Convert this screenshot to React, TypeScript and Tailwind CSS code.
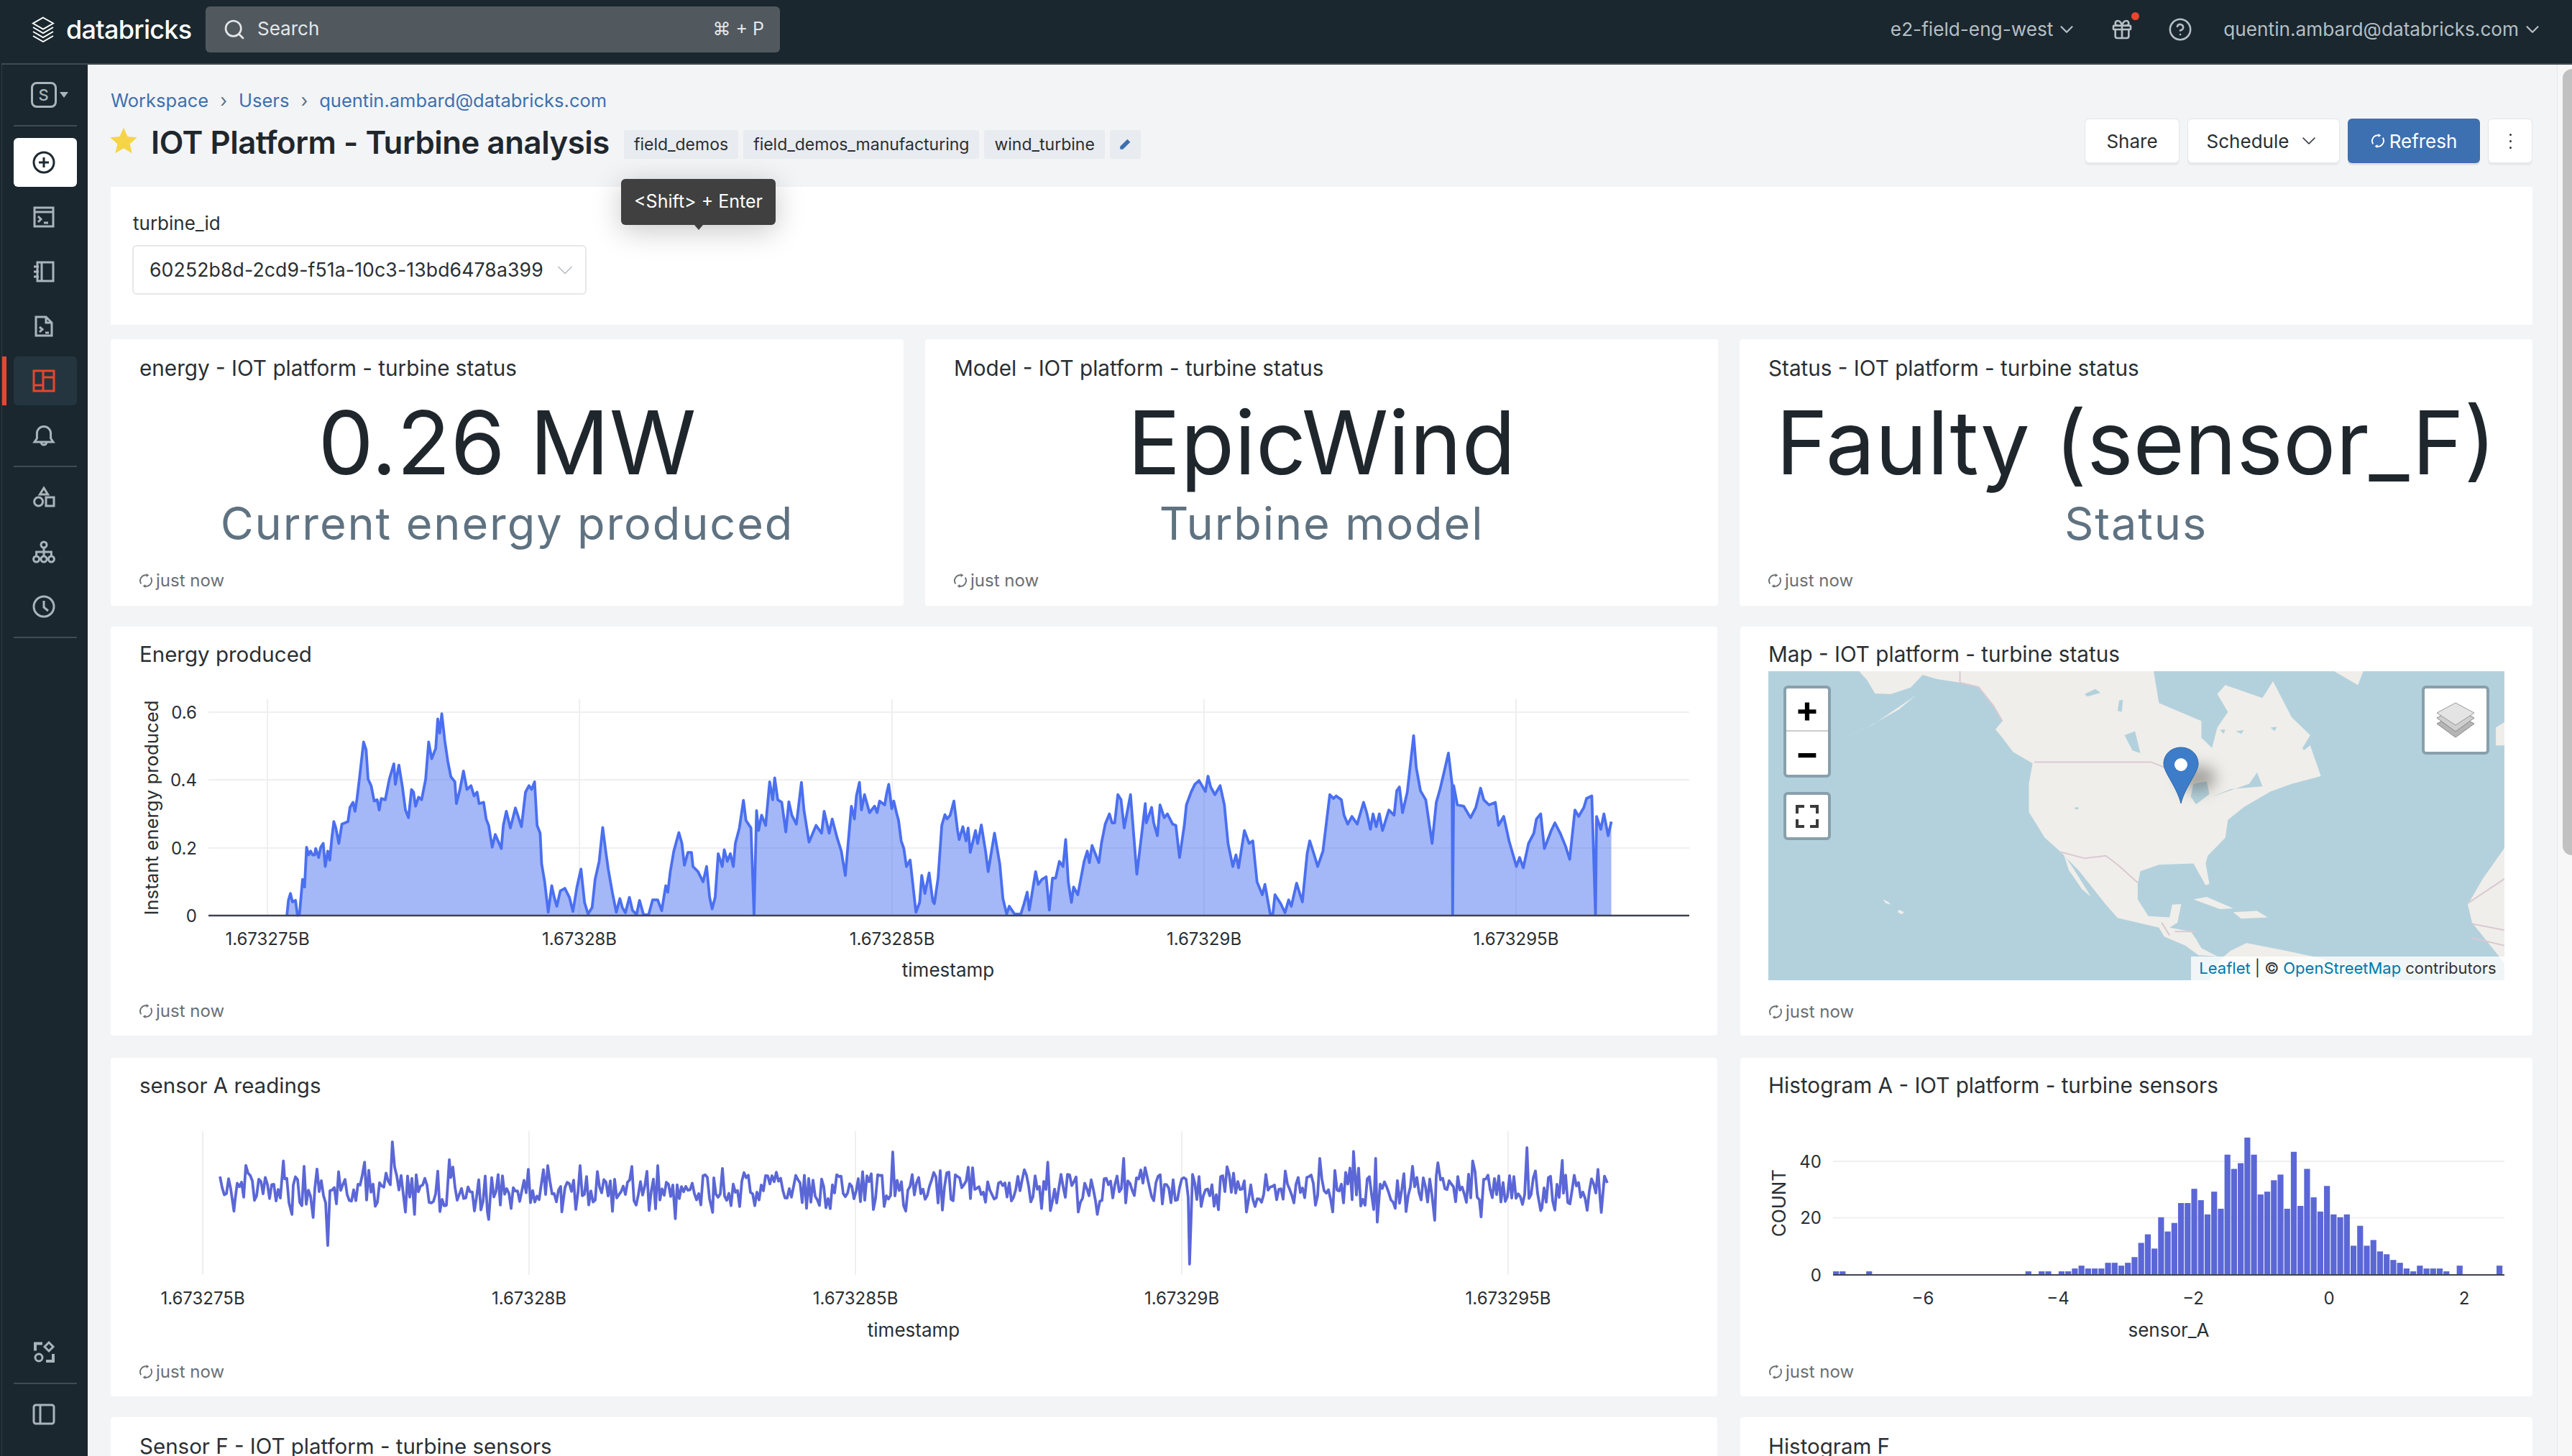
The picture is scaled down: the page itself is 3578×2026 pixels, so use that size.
import { ChevronDown, CircleHelp, Gift, Search } from "lucide-react";

const energyLeft = "355,1130 358,1072 362,1045 366,1078 372,1072 376,1130 380,1125 386,990 390,1020 394,865 398,895 402,880 406,895 410,895 412,870 418,905 422,865 427,850 431,940 436,880 440,915 444,830 448,765 452,790 458,850 464,775 470,770 476,765 480,710 486,690 490,725 494,675 498,610 507,455 512,485 516,600 522,625 528,685 534,680 538,720 542,675 550,680 558,600 567,540 570,620 577,545 584,630 590,720 596,750 602,640 606,650 610,705 616,670 622,680 630,600 636,455 642,520 650,480 654,365 658,420 662,345 668,450 674,530 680,590 688,610 691,695 698,640 705,568 712,640 720,625 726,665 732,650 736,695 745,690 750,755 755,780 762,865 768,815 780,870 784,780 790,725 798,790 808,712 820,785 828,650 835,625 840,640 846,610 851,780 857,810 860,930 866,1000 873,1118 880,1015 885,1060 890,1095 897,1035 906,1025 915,1060 922,1115 930,1020 938,950 945,1080 952,1125 960,1100 966,990 974,920 981,788 987,880 992,950 1000,1040 1008,1118 1015,1065 1020,1100 1026,1120 1034,1060 1040,1110 1048,1128 1054,1072 1062,1128 1072,1128 1080,1070 1090,1070 1098,1112 1106,1015 1110,1040 1115,960 1122,880 1132,808 1138,850 1143,935 1150,885 1157,885 1160,940 1170,960 1180,1000 1187,940 1193,1060 1198,1105 1204,1060 1210,890 1218,940 1222,875 1228,920 1234,890 1240,940 1244,850 1252,790 1260,682 1265,760 1275,790 1281,1128 1286,722 1290,800 1296,740 1304,780 1312,610 1318,680 1322,595 1328,680 1336,690 1344,805 1350,688 1356,740 1365,775 1375,612 1380,720 1390,845 1404,780 1415,810 1420,725 1430,810 1436,755 1446,830 1454,880 1462,975 1474,705 1480,755 1484,665 1490,612 1494,720 1500,660 1510,730 1520,705 1525,730 1530,685 1540,700 1544,655 1548,620 1554,715 1558,685 1564,735";
const energyRight = "0,760 5,840 10,870 15,940 22,915 33,1118 40,1080 44,975 50,1045 58,965 65,1075 68,1085 75,985 82,780 88,738 92,755 98,740 105,685 112,800 115,835 122,785 128,840 132,790 136,885 146,800 150,850 157,778 165,880 170,960 182,810 192,930 198,1065 205,1125 210,1095 220,1125 232,1125 238,1085 244,1040 248,1110 260,960 265,1010 272,990 280,980 286,1110 292,985 298,985 305,920 312,940 317,835 322,1000 328,1080 332,1020 340,1050 352,920 358,880 362,925 367,858 380,925 385,848 392,775 400,735 405,770 410,770 416,660 422,680 428,790 440,660 452,970 462,800 468,695 470,770 480,710 484,770 491,820 496,700 504,750 510,735 520,775 526,780 533,905 542,780 546,700 555,650 562,620 570,605 582,648 587,588 592,630 600,660 610,625 618,700 625,850 634,940 640,895 645,945 656,800 665,850 672,840 680,1000 690,1050 695,1010 705,1125 710,1125 714,1050 725,1085 733,1120 740,1070 745,1095 755,1005 766,1078 775,890 780,840 790,905 795,940 805,880 818,660 825,675 830,665 840,680 845,740 852,775 860,745 870,775 882,690 888,730 895,795 900,735 906,785 912,735 918,800 930,720 940,740 945,645 950,630 956,730 965,650 977,430 982,555 990,645 1000,680 1012,850 1020,690 1027,640 1035,570 1043,498 1050,620 1051,1128 1053,625 1060,700 1072,705 1085,750 1095,710 1104,635 1110,680 1120,700 1132,690 1138,780 1148,745 1158,840 1172,940 1178,905 1185,945 1195,850 1205,810 1210,755 1218,735 1225,870 1238,800 1245,770 1255,810 1265,860 1273,912 1283,720 1290,745 1300,710 1305,675 1315,665 1322,1128 1324,745 1332,795 1338,735 1346,820 1352,765";

// traced from the reference, converted to page px
const parsePts = (s: string, fx: (x: number) => number) =>
  s.split(" ").map((p) => {
    const [x, y] = p.split(",").map(Number);
    return [fx(x), 870 + y / 2.8];
  });
const energyPts = [
  ...parsePts(energyLeft, (x) => 150 + x / 1.425),
  ...parsePts(energyRight, (x) => 1250 + x / 1.3635),
];
const energyLine = energyPts.map((p) => p.join(",")).join(" ");
const energyArea = `${energyPts[0][0]},1274 ${energyLine} ${energyPts[energyPts.length - 1][0]},1274`;

function rng(seed: number) {
  return () => {
    seed = (seed * 1664525 + 1013904223) % 4294967296;
    return seed / 4294967296;
  };
}

const rand = rng(17);
const sensorPts: number[][] = [];
for (let x = 306; x <= 2233; x += 3) {
  sensorPts.push([x, 1654 + (rand() - 0.5) * (rand() > 0.6 ? 66 : 40)]);
}
sensorPts.push([2236, 1646]);
const spikesA = [[564, 335], [436, 742], [348, 410], [407, 632], [755, 640], [1125, 637], [1556, 375], [509, 415], [677, 405], [365, 620], [250, 607], [1198, 432], [1199, 612], [608, 620], [900, 610]];
const spikesB = [[552, 815], [863, 373], [908, 650], [1192, 358], [1017, 643], [427, 400], [377, 620], [283, 415], [288, 605], [799, 400], [905, 400], [1023, 417], [1089, 410], [1105, 630], [1259, 408], [1333, 612], [1218, 605]];
spikesA.forEach(([zx, zy]) => {
  const x = 150 + zx / 1.425;
  sensorPts[Math.round((x - 306) / 3)] = [x, 1470 + zy / 2.82];
});
spikesB.forEach(([zx, zy]) => {
  const x = 1250 + zx / 1.3635;
  sensorPts[Math.round((x - 306) / 3)] = [x, 1470 + zy / 2.82];
});
const sensorLine = sensorPts.map((p) => p.join(",")).join(" ");

const histo = [1, 1, 0, 0, 0, 1, ...Array(23).fill(0), 1, 0, 1, 1, 0, 1, 1, 2, 3, 2, 2, 2, 4, 4, 3, 4, 6, 11, 14, 9, 20, 15, 18, 25, 25, 30, 26, 21, 29, 23, 42, 37, 39, 48, 42, 28, 29, 33, 35, 23, 43, 24, 37, 27, 22, 31, 21, 20, 21, 10, 17, 10, 12, 8, 7, 5, 4, 2, 1, 3, 2, 2, 2, 1, 0, 3, 0, 0, 0, 0, 0, 3];

function SyncIcon({ className }: { className: string }) {
  return (
    <svg viewBox="0 0 16 16" className={className} fill="none" stroke="currentColor" strokeWidth="1.5">
      <path d="M2.600 11.500A6.300 6.300 0 0 1 9 1.900" />
      <path d="M13.400 4.500A6.300 6.300 0 0 1 7 14.100" />
      <path d="M8.500 0l3 2-3 2z" fill="currentColor" stroke="none" />
      <path d="M7.500 16l-3-2 3-2z" fill="currentColor" stroke="none" />
    </svg>
  );
}

function JustNow({ className }: { className: string }) {
  return (
    <div className={`flex items-center gap-[4px] pl-[39px] text-[24px] leading-none text-[#6b6f73] ${className}`}>
      <SyncIcon className="h-[20px] w-[20px]" />
      <span>just now</span>
    </div>
  );
}

function StatCard({ title, value, sub }: { title: string; value: string; sub: string }) {
  return (
    <div className="flex h-[371px] flex-col rounded-[4px] bg-white">
      <div className="pl-[40px] pt-[22px] text-[29.7px] leading-[36px] text-[#2a2f33]">{title}</div>
      <div className="mt-[21px] text-center text-[122.5px] leading-[130px] text-[#1f272d]">{value}</div>
      <div className="mt-[7px] text-center text-[63px] leading-[80px] tracking-[0.03em] text-[#5f7281]">{sub}</div>
      <JustNow className="mt-[28px]" />
    </div>
  );
}

function SideItem({ active, red, children }: { active?: boolean; red?: boolean; children: React.ReactNode }) {
  return (
    <div className="relative flex h-[68px] w-[88px] shrink-0 items-center pl-[26px]">
      {active && <div className="absolute inset-0 rounded-[6px] bg-white" />}
      {red && <div className="absolute inset-0 rounded-[6px] bg-[#24353f]" />}
      {red && <div className="absolute left-[-16px] top-0 h-[68px] w-[6px] bg-[#e8462e]" />}
      <svg
        viewBox="0 0 16 16"
        className={`relative h-[32px] w-[32px] ${active ? "text-[#1d2a33]" : red ? "text-[#e8462e]" : "text-[#a9b5ba]"}`}
        fill="none"
        stroke="currentColor"
        strokeWidth="1.5"
      >
        {children}
      </svg>
    </div>
  );
}

function Rule() {
  return <div className="h-[2px] w-[88px] shrink-0 bg-[#3f4c54]" />;
}

function Tag({ children }: { children: React.ReactNode }) {
  return (
    <div className="flex h-[40px] items-center rounded-[3px] bg-[#e8ebef] px-[14px] text-[23px] text-[#2a2f33]">{children}</div>
  );
}

function MapView() {
  return (
    <div className="relative ml-[39px] h-[430px] w-[1024px] overflow-hidden bg-[#b3d1dd]">
      <svg viewBox="54 151 1387 1204" preserveAspectRatio="none" className="block h-[430px] w-[1024px]">
        <g fill="#f0eeea">
          <path d="M225 151L240 185 255 238 285 240 322 215 345 165 372 182 415 195 450 212 478 285 495 345 482 378 492 402 515 465 552 510 545 590 545 700 575 800 605 855 640 930 690 1060 712 1112 790 1150 800 1185 840 1220 865 1258 900 1262 870 1230 860 1195 850 1165 810 1150 825 1130 832 1058 815 1060 810 1110 770 1105 750 1040 750 980 755 930 790 905 855 900 878 985 885 980 878 900 882 870 915 800 920 730 950 680 1000 620 1040 590 1095 560 1085 500 1060 452 1075 400 1040 330 1005 190 985 255 915 205 900 240 920 310 900 370 890 450 870 410 870 345 790 275 780 151Z" />
          <path d="M885 1355L905 1275 925 1240 955 1210 1030 1240 1082 1263 1150 1300 1240 1355Z" />
          <path d="M610 860L635 940 662 1030 645 1000 620 925Z" />
          <path d="M202 405L250 360 300 290 332 245 300 300 240 370Z" />
          <path d="M855 1040L880 1030 930 1075 905 1078Z" />
          <path d="M930 1090L975 1085 995 1110 945 1115Z" />
          <path d="M1120 151L1165 205 1175 151Z" />
          <path d="M1441 840L1400 960 1372 1060 1380 1130 1430 1260 1441 1290Z" />
          <path d="M1425 370L1441 350 1441 440 1425 440Z" />
          <path d="M1050 480L1075 440 1095 560 1060 530Z" />
          <path d="M270 1040L280 1050 285 1060 275 1055ZM300 1080L310 1090 305 1098 298 1090Z" />
        </g>
        <g fill="#b3d1dd">
          <path d="M725 400L745 385 755 470 740 460Z" />
          <path d="M855 590L880 580 885 630 860 670 850 640Z" />
          <path d="M890 640L960 590 975 545 985 600 925 610Z" />
          <path d="M650 240L670 220 680 235 655 250Z" />
          <path d="M715 265L722 262 720 310 712 305ZM905 380L915 378 912 395ZM935 385L950 380 945 395ZM1000 370L1012 368 1008 385Z" />
          <circle cx="635" cy="685" r="4" />
        </g>
        <g fill="none" stroke="#d9c9d2" strokeWidth="2">
          <path d="M555 505H775L800 525" vectorEffect="non-scaling-stroke" />
          <path d="M605 855L650 880 690 870 715 910 750 975" vectorEffect="non-scaling-stroke" />
          <path d="M415 151V195L450 212 478 285 495 345" vectorEffect="non-scaling-stroke" />
          <path d="M795 1130L810 1180M820 1165L860 1165M1372 1055L1441 960M1380 1135L1441 1160M1380 1190L1441 1220" vectorEffect="non-scaling-stroke" />
        </g>
      </svg>
      {/* marker */}
      <div className="absolute left-[572px] top-[132px] h-[34px] w-[50px] rounded-full bg-[#5b5b55]/50 blur-[10px]" />
      <svg viewBox="0 0 50 80" className="absolute left-[549px] top-[105px] h-[80px] w-[50px]">
        <path d="M25 79C19 55 1 36 1 24 1 11 11 1 25 1s24 10 24 23c0 12-18 31-24 55z" fill="#3d7cc9" stroke="#2a6aa8" strokeWidth="1" />
        <ellipse cx="25" cy="25" rx="9" ry="9" fill="#fff" />
      </svg>
      {/* leaflet controls */}
      <div className="absolute left-[21px] top-[20px] flex h-[128px] w-[66px] flex-col rounded-[6px] border-4 border-[#88a0ab] bg-white text-black">
        <div className="flex h-[60px] items-center justify-center border-b-2 border-[#ccc] text-[50px] font-bold leading-none">+</div>
        <div className="flex flex-1 items-center justify-center text-[50px] font-bold leading-none">−</div>
      </div>
      <div className="absolute left-[21px] top-[168px] flex h-[67px] w-[66px] items-center justify-center rounded-[6px] border-4 border-[#88a0ab] bg-white">
        <svg viewBox="0 0 32 32" className="h-[32px] w-[32px]" fill="none" stroke="#3a3a3a" strokeWidth="4">
          <path d="M2 12V2h10M20 2h10v10M30 20v10H20M12 30H2V20" />
        </svg>
      </div>
      <div className="absolute left-[909px] top-[20px] flex h-[96px] w-[94px] items-center justify-center rounded-[6px] border-4 border-[#88a0ab] bg-white">
        <svg viewBox="0 0 54 50" className="h-[50px] w-[54px]">
          <path d="M1 30L27 16 53 30 27 49z" fill="#b5b5b5" stroke="#888" />
          <path d="M1 22L27 8 53 22 27 41z" fill="#cfcfcf" stroke="#888" />
          <path d="M1 15L27 1 53 15 27 32z" fill="#e4e4e4" stroke="#999" />
        </svg>
      </div>
      <div className="absolute bottom-0 right-0 flex h-[33px] w-[436px] items-center justify-center gap-[6px] bg-white/80 text-[22px] text-[#333]">
        <span className="text-[#0078a8]">Leaflet</span>
        <span>| ©</span>
        <span className="text-[#0078a8]">OpenStreetMap</span>
        <span>contributors</span>
      </div>
    </div>
  );
}

export default function App() {
  return (
    <div className="flex h-screen w-full flex-col overflow-hidden bg-[#1a272f] pl-[2px] text-[#2a2f33] [font-family:Inter,sans-serif]">
      {/* top bar */}
      <div className="flex h-[90px] shrink-0 items-center border-b-2 border-[#3f4b52] bg-[#1a272f] pb-[6px]">
        <div className="flex w-[284px] items-center pl-[42px] text-white">
          <svg viewBox="0 0 32 36" className="h-[36px] w-[32px]" fill="none" stroke="currentColor" strokeWidth="2">
            <path d="M16 1.500L30 9.500 16 17.500 2 9.500z" />
            <path d="M2 15l14 8 14-8" />
            <path d="M2 21l14 8 14-8" />
            <path d="M2 27l14 8 14-8" />
          </svg>
          <span className="ml-[16px] text-[36px] font-medium leading-none tracking-[-0.02em]">databricks</span>
        </div>
        <div className="flex h-[64px] w-[799px] items-center rounded-[6px] bg-[#51595f] pl-[24px] pr-[22px] text-[#e4e7e9]">
          <Search className="h-[32px] w-[32px]" strokeWidth={2} />
          <span className="ml-[16px] pb-[3px] text-[26px]">Search</span>
          <span className="ml-auto text-[25px]">⌘ + P</span>
        </div>
        <div className="ml-auto flex items-center text-[26.2px] text-[#b5bfc4]">
          <span>e2-field-eng-west</span>
          <ChevronDown className="ml-[4px] h-[30px] w-[30px]" strokeWidth={1.8} />
          <div className="relative ml-[46px]">
            <Gift className="h-[32px] w-[32px]" strokeWidth={2} />
            <div className="absolute right-[-8px] top-[-8px] h-[11px] w-[11px] rounded-full bg-[#e8462e]" />
          </div>
          <CircleHelp className="ml-[48px] h-[34px] w-[34px]" strokeWidth={1.8} />
          <span className="ml-[43px]">quentin.ambard@databricks.com</span>
          <ChevronDown className="ml-[4px] mr-[40px] h-[30px] w-[30px]" strokeWidth={1.8} />
        </div>
      </div>

      <div className="flex min-h-0 flex-1">
        {/* sidebar */}
        <div className="flex w-[120px] shrink-0 flex-col items-center gap-[8px] border-l border-[#2c3c46] bg-[#1a272f] pt-[8px]">
          <div className="flex h-[68px] w-[88px] shrink-0 items-center pl-[24px] text-[#a9b5ba]">
            <div className="flex h-[36px] w-[36px] items-center justify-center rounded-[8px] border-[3px] border-[#a9b5ba] text-[22px] font-medium leading-none">S</div>
            <div className="ml-[4px] h-0 w-0 border-x-[6px] border-t-[8px] border-x-transparent border-t-[#a9b5ba]" />
          </div>
          <Rule />
          <div className="h-0" />
          <SideItem active>
            <circle cx="8" cy="8" r="7" />
            <path d="M8 4.500v7M4.500 8h7" />
          </SideItem>
          <SideItem>
            <rect x="1.500" y="1.500" width="13" height="13" />
            <path d="M1.500 4.500h13M4 7.500l2 2-2 2M8 12h3" />
          </SideItem>
          <SideItem>
            <rect x="3.500" y="1.500" width="11" height="13" />
            <path d="M1 4.500h3.500M1 8h3.500M1 11.500h3.500M6.500 1.500v13" />
          </SideItem>
          <SideItem>
            <path d="M2.500 14.500V1.500h7l4 4v9zM9.500 1.500v4h4M5 8.500l2 1.700-2 1.800M9 12.500h2.500" />
          </SideItem>
          <SideItem red>
            <rect x="1" y="1" width="14" height="14" />
            <path d="M7.500 1v14M1 11h6.500M7.500 5.500H15" />
          </SideItem>
          <SideItem>
            <path d="M1.500 12.500h13l-1.700-2.500V6.500a4.800 4.800 0 0 0-9.600 0V10zM6 12.500a2 2 0 0 0 4 0" />
          </SideItem>
          <Rule />
          <SideItem>
            <path d="M8 1.500l2.800 4.500H5.200z" />
            <circle cx="4.300" cy="11" r="3" />
            <rect x="9.500" y="8" width="5.500" height="6" />
          </SideItem>
          <SideItem>
            <circle cx="8" cy="3" r="2" />
            <circle cx="2.800" cy="13" r="2" />
            <circle cx="8" cy="13" r="2" />
            <circle cx="13.200" cy="13" r="2" />
            <path d="M8 5v6M2.800 11V8h10.400v3" />
          </SideItem>
          <SideItem>
            <circle cx="8" cy="8" r="7" />
            <path d="M8 4v4.500l3 2.500" />
          </SideItem>
          <Rule />
          <div className="flex-1" />
          <SideItem>
            <path d="M7 1.800H2v5M14.500 9v5H9.500" strokeWidth="2" />
            <path d="M11.500 1l3 3-3 3-3-3z" />
            <circle cx="4.500" cy="11.500" r="2.500" />
          </SideItem>
          <Rule />
          <div className="mb-[24px]">
            <SideItem>
              <rect x="1" y="1.500" width="14" height="13" rx="1.500" />
              <path d="M5.500 1.500v13" />
            </SideItem>
          </div>
        </div>

        {/* page */}
        <div className="relative flex min-w-0 flex-1 bg-[#f3f4f6]">
          <div className="min-w-0 flex-1 overflow-hidden pl-[32px] pr-[34px]">
            <div className="flex h-[68px] items-end gap-[16px] pb-[2px] text-[25.5px] leading-[32px] text-[#3d70b0]">
              <span>Workspace</span>
              <span className="text-[#5f7281]">›</span>
              <span>Users</span>
              <span className="text-[#5f7281]">›</span>
              <span>quentin.ambard@databricks.com</span>
            </div>
            <div className="mt-[7px] flex h-[62px] items-center">
              <svg viewBox="0 0 24 24" className="ml-[-2px] h-[40px] w-[40px]" fill="#f5d547">
                <path d="M12 1l3.300 7.400 7.900.8-6 5.300 1.800 7.900-7-4.200-7 4.200 1.800-7.900-6-5.300 7.900-.8z" />
              </svg>
              <span className="ml-[18px] pt-[6px] text-[43.7px] font-semibold leading-none tracking-[-0.01em] text-[#1f272d]">IOT Platform - Turbine analysis</span>
              <div className="ml-[20px] mt-[10px] flex gap-[7px]">
                <Tag>field_demos</Tag>
                <Tag>field_demos_manufacturing</Tag>
                <Tag>wind_turbine</Tag>
                <div className="flex h-[40px] w-[43px] items-center justify-center rounded-[3px] bg-[#e8ebef]">
                  <svg viewBox="0 0 16 16" className="h-[18px] w-[18px]" fill="#3d70b0">
                    <path d="M11 1.500l3.500 3.500-9 9H2v-3.500z" />
                  </svg>
                </div>
              </div>
              <div className="ml-auto flex gap-[11px] text-[26px]">
                <div className="flex h-[62px] w-[132px] items-center justify-center rounded-[6px] border border-[#e4e6e9] bg-white shadow-[0_3px_0_#e8e9eb]">Share</div>
                <div className="flex h-[62px] w-[212px] items-center justify-center gap-[12px] rounded-[6px] border border-[#e4e6e9] bg-white shadow-[0_3px_0_#e8e9eb]">
                  Schedule
                  <ChevronDown className="h-[32px] w-[32px]" strokeWidth={1.2} />
                </div>
                <div className="flex h-[62px] w-[184px] items-center justify-center gap-[6px] rounded-[6px] bg-[#3d70b0] text-white shadow-[0_3px_0_#e0e2e6]">
                  <SyncIcon className="h-[20px] w-[20px]" />
                  Refresh
                </div>
                <div className="flex h-[62px] w-[62px] items-center justify-center rounded-[6px] border border-[#e4e6e9] bg-white shadow-[0_3px_0_#e8e9eb]">
                  <div className="flex flex-col gap-[6px]">
                    <div className="h-[3px] w-[3px] rounded-full bg-[#333]" />
                    <div className="h-[3px] w-[3px] rounded-full bg-[#333]" />
                    <div className="h-[3px] w-[3px] rounded-full bg-[#333]" />
                  </div>
                </div>
              </div>
            </div>

            {/* filter */}
            <div className="mt-[33px] h-[192px] bg-white pl-[30px] pt-[34px]">
              <div className="pl-[1px] text-[26px] leading-[34px]">turbine_id</div>
              <div className="mt-[13px] flex h-[69px] w-[632px] items-center justify-between rounded-[6px] border-2 border-[#e6e7e9] pl-[22px] pr-[10px] text-[26.6px] tracking-[0.005em]">
                <span>60252b8d-2cd9-f51a-10c3-13bd6478a399</span>
                <ChevronDown className="h-[36px] w-[36px] text-[#b8bcbf]" strokeWidth={1.1} />
              </div>
            </div>

            {/* stats */}
            <div className="mt-[20px] grid grid-cols-3 gap-[30px]">
              <StatCard title="energy - IOT platform - turbine status" value="0.26 MW" sub="Current energy produced" />
              <StatCard title="Model - IOT platform - turbine status" value="EpicWind" sub="Turbine model" />
              <StatCard title="Status - IOT platform - turbine status" value="Faulty (sensor_F)" sub="Status" />
            </div>

            {/* energy + map */}
            <div className="mt-[29px] grid grid-cols-[1fr_1102px] gap-[32px]">
              <div className="h-[569px] rounded-[4px] bg-white">
                <div className="h-[88px] pl-[40px] pt-[20px] text-[29.5px] leading-[36px]">Energy produced</div>
                <svg viewBox="154 960 2235 420" className="block h-[420px] w-full">
                  {[372, 806, 1241, 1675, 2109].map((x) => (
                    <line key={x} x1={x} x2={x} y1="973" y2="1274" stroke="#efefef" strokeWidth="2" />
                  ))}
                  {[991, 1085, 1180].map((y) => (
                    <line key={y} x1="290" x2="2350" y1={y} y2={y} stroke="#efefef" strokeWidth="2" />
                  ))}
                  <polygon points={energyArea} fill="#4a6ff0" fillOpacity="0.5" />
                  <polyline points={energyLine} fill="none" stroke="#4a6ff0" strokeWidth="3.800" strokeLinejoin="round" />
                  <line x1="290" x2="2350" y1="1274" y2="1274" stroke="#3f4350" strokeWidth="2.500" />
                  <g fill="#2a2f33" fontSize="24">
                    {[["0.6", 991], ["0.4", 1085], ["0.2", 1180], ["0", 1274]].map(([t, y]) => (
                      <text key={t} x="274" y={Number(y) + 9} textAnchor="end">{t}</text>
                    ))}
                    {[["1.673275B", 372], ["1.67328B", 806], ["1.673285B", 1241], ["1.67329B", 1675], ["1.673295B", 2109]].map(([t, x]) => (
                      <text key={t} x={x} y="1315" textAnchor="middle">{t}</text>
                    ))}
                    <text x="1319" y="1359" textAnchor="middle" fontSize="26">timestamp</text>
                    <text x="220" y="1124" textAnchor="middle" fontSize="25.800" transform="rotate(-90 220 1124)">Instant energy produced</text>
                  </g>
                </svg>
                <JustNow className="pt-[15px]" />
              </div>
              <div className="h-[569px] rounded-[4px] bg-white">
                <div className="h-[62px] pl-[39px] pt-[20px] text-[29.7px] leading-[36px]">Map - IOT platform - turbine status</div>
                <MapView />
                <JustNow className="pt-[32px]" />
              </div>
            </div>

            {/* sensor row */}
            <div className="mt-[31px] grid grid-cols-[1fr_1102px] gap-[32px]">
              <div className="h-[471px] rounded-[4px] bg-white">
                <div className="h-[88px] pl-[40px] pt-[20px] text-[29.5px] leading-[36px]">sensor A readings</div>
                <svg viewBox="154 1560 2235 320" className="block h-[320px] w-full">
                  {[282, 736, 1190, 1644, 2098].map((x) => (
                    <line key={x} x1={x} x2={x} y1="1574" y2="1774" stroke="#efefef" strokeWidth="2" />
                  ))}
                  <polyline points={sensorLine} fill="none" stroke="#5b67d6" strokeWidth="3.800" strokeLinejoin="round" />
                  <g fill="#2a2f33" fontSize="24">
                    {[["1.673275B", 282], ["1.67328B", 736], ["1.673285B", 1190], ["1.67329B", 1644], ["1.673295B", 2098]].map(([t, x]) => (
                      <text key={t} x={x} y="1815" textAnchor="middle">{t}</text>
                    ))}
                    <text x="1271" y="1860" textAnchor="middle" fontSize="26">timestamp</text>
                  </g>
                </svg>
                <JustNow className="pt-[17px]" />
              </div>
              <div className="h-[471px] rounded-[4px] bg-white">
                <div className="h-[88px] pl-[39px] pt-[20px] text-[29.7px] leading-[36px]">Histogram A - IOT platform - turbine sensors</div>
                <svg viewBox="2421 1560 1102 320" className="block h-[320px] w-full">
                  {[1616, 1694.5].map((y) => (
                    <line key={y} x1="2550" x2="3484" y1={y} y2={y} stroke="#efefef" strokeWidth="2" />
                  ))}
                  {histo.map((v, i) =>
                    v > 0 ? (
                      <rect key={i} x={2550 + i * 9.23} y={1773 - v * 3.96} width="8.200" height={v * 3.96} fill="#5b67d6" />
                    ) : null
                  )}
                  <line x1="2550" x2="3484" y1="1774" y2="1774" stroke="#3f4350" strokeWidth="2" />
                  <g fill="#2a2f33" fontSize="24">
                    {[["40", 1616], ["20", 1694], ["0", 1774]].map(([t, y]) => (
                      <text key={t} x="2534" y={Number(y) + 9} textAnchor="end">{t}</text>
                    ))}
                    {[["−6", 2675], ["−4", 2863], ["−2", 3051], ["0", 3240], ["2", 3428]].map(([t, x]) => (
                      <text key={t} x={x} y="1815" textAnchor="middle">{t}</text>
                    ))}
                    <text x="3017" y="1860" textAnchor="middle" fontSize="26">sensor_A</text>
                    <text x="2484" y="1674" textAnchor="middle" fontSize="25.800" transform="rotate(-90 2484 1674)">COUNT</text>
                  </g>
                </svg>
                <JustNow className="pt-[17px]" />
              </div>
            </div>

            {/* next row, cut by the window */}
            <div className="mt-[29px] grid grid-cols-[1fr_1102px] gap-[32px]">
              <div className="h-[400px] rounded-[4px] bg-white pl-[40px] pt-[22px] text-[29.5px] leading-[36px]">Sensor F - IOT platform - turbine sensors</div>
              <div className="h-[400px] rounded-[4px] bg-white pl-[39px] pt-[22px] text-[29.5px] leading-[36px]">Histogram F</div>
            </div>
          </div>

          {/* scrollbar */}
          <div className="w-[21px] shrink-0 border-l border-[#e6e7e9] bg-[#f7f7f8] pl-[7px] pt-[6px]">
            <div className="h-[1094px] w-full rounded-l-full bg-[#c1c1c1]" />
          </div>

          {/* run tooltip */}
          <div className="absolute left-[742px] top-[159px] flex h-[64px] w-[215px] items-center justify-center rounded-[6px] bg-[#404040] text-[25px] text-white shadow-[0_8px_40px_rgba(0,0,0,0.22)]">
            &lt;Shift&gt; + Enter
            <div className="absolute bottom-[-7px] left-1/2 h-0 w-0 -translate-x-1/2 border-x-[6px] border-t-[7px] border-x-transparent border-t-[#404040]" />
          </div>
        </div>
      </div>
    </div>
  );
}
